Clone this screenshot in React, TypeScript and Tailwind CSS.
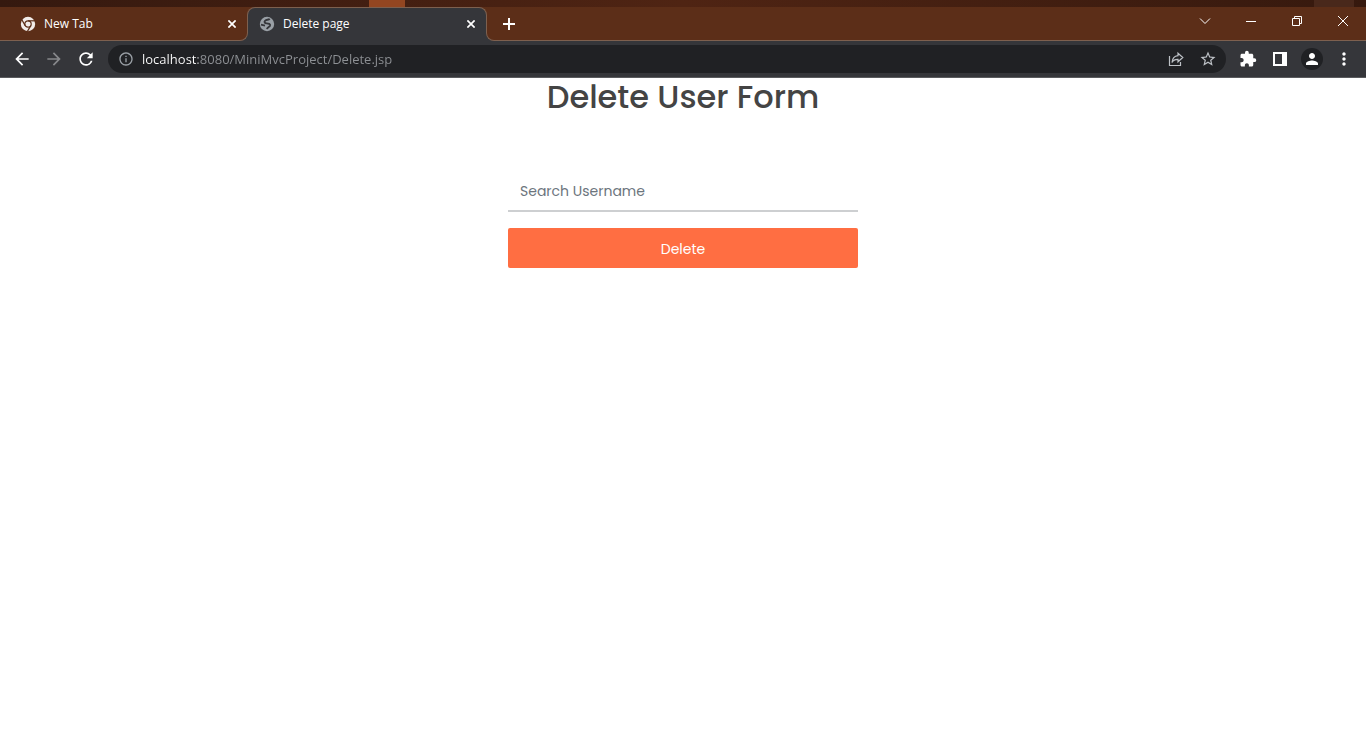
import React from "react";
import {
  MdArrowBack,
  MdArrowForward,
  MdExtension,
  MdInfoOutline,
  MdMoreVert,
  MdPerson,
  MdRefresh,
  MdStarBorder,
} from "react-icons/md";

const iconButton = "flex h-7 w-8 shrink-0 items-center justify-center";

function ChromeGlyph() {
  return (
    <svg className="size-4 shrink-0" viewBox="0 0 16 16" fill="none" aria-hidden="true">
      <circle cx="8" cy="8" r="7.2" fill="#f1ece9" />
      <g stroke="#5c2e18" strokeWidth="1.2">
        <circle cx="8" cy="8" r="3.2" />
        <path d="M8 4.8h7" />
        <path d="M8 4.8h7" transform="rotate(120 8 8)" />
        <path d="M8 4.8h7" transform="rotate(240 8 8)" />
      </g>
    </svg>
  );
}

function GlobeGlyph() {
  return (
    <svg className="size-4 shrink-0" viewBox="0 0 16 16" fill="none" aria-hidden="true">
      <circle cx="8" cy="8" r="7.2" fill="#9aa0a6" />
      <path
        d="M10.6 2.6C10 4.2 7.6 3.4 6.2 4.6 4.8 6 5.8 7.4 7.6 7.4 9.6 7.4 11.6 7.8 11 9.6 10.4 11.2 8.4 10.8 8 13.2"
        stroke="#35363a"
        strokeWidth="1.9"
      />
      <path d="M2 8.6 6 9.6" stroke="#35363a" strokeWidth="1.6" />
    </svg>
  );
}

function CloseGlyph() {
  return (
    <svg className="size-2" viewBox="0 0 8 8" fill="none" stroke="currentColor" strokeWidth="1.7" aria-hidden="true">
      <path d="M0.4 0.4 7.6 7.6M7.6 0.4 0.4 7.6" />
    </svg>
  );
}

function Tab({ title, icon, active }: { title: string; icon: React.ReactNode; active?: boolean }) {
  return (
    <div
      className={
        active
          ? "relative flex w-60 items-center rounded-t-lg border-x border-t border-[#7d604f] bg-[#35363a] pr-2.5 pb-px pl-[11px]"
          : "flex w-[247px] items-center border-b border-[#7d604f] pr-2.5 pl-5"
      }
    >
      {active && (
        <>
          <span className="absolute bottom-0 -left-2 size-2 bg-[#35363a]">
            <span className="block size-full rounded-br-lg border-r border-b border-[#7d604f] bg-[#5c2e18]" />
          </span>
          <span className="absolute -right-2 bottom-0 size-2 bg-[#35363a]">
            <span className="block size-full rounded-bl-lg border-b border-l border-[#7d604f] bg-[#5c2e18]" />
          </span>
        </>
      )}
      <button type="button" className="flex min-w-0 flex-1 items-center gap-2 text-left text-[12px] text-white">
        {icon}
        <span className="truncate">{title}</span>
      </button>
      <button type="button" aria-label={`Close ${title}`} className="p-px text-white">
        <CloseGlyph />
      </button>
    </div>
  );
}

function WindowButton({ label, children }: { label: string; children: React.ReactNode }) {
  return (
    <button type="button" aria-label={label} className="flex h-7 w-[46px] items-center justify-center text-white">
      <svg className="size-3" viewBox="0 0 12 12" fill="none" stroke="currentColor" strokeWidth="1" aria-hidden="true">
        {children}
      </svg>
    </button>
  );
}

export default function App() {
  return (
    <div className="min-h-screen bg-white font-['Open_Sans','Noto_Sans',sans-serif]">
      <header>
        <div className="flex h-[7px] bg-linear-to-r from-[#35190f] via-[#4f2413] to-[#36190e]">
          <div className="ml-[369px] w-9 bg-[#934621]" />
          <div className="mr-3 ml-auto w-10 bg-[#49281b]" />
        </div>
        <div className="flex h-[34px] bg-[#5c2e18]">
          <Tab title="New Tab" icon={<ChromeGlyph />} />
          <Tab title="Delete page" active icon={<GlobeGlyph />} />
          <div className="flex flex-1 border-b border-[#7d604f]">
            <button type="button" aria-label="New tab" className="ml-2 flex w-7 items-center justify-center text-white">
              <svg className="size-3" viewBox="0 0 12 12" stroke="currentColor" strokeWidth="2" aria-hidden="true">
                <path d="M6 0v12M0 6h12" />
              </svg>
            </button>
            <div className="ml-auto flex">
              <WindowButton label="Search tabs">
                <path d="M1 3.5 6 8.5 11 3.5" />
              </WindowButton>
              <WindowButton label="Minimize">
                <path d="M1 6.5h10" />
              </WindowButton>
              <WindowButton label="Restore">
                <path d="M1.5 3.5h7v7h-7zM3.5 3.5v-2h7v7h-2" />
              </WindowButton>
              <WindowButton label="Close">
                <path d="M1 1 11 11M11 1 1 11" />
              </WindowButton>
            </div>
          </div>
        </div>
        <div className="flex h-[37px] items-center border-b border-[#5a5b5e] bg-[#35363a] px-1.5 text-white">
          <button type="button" aria-label="Back" className={iconButton}>
            <MdArrowBack className="size-5" />
          </button>
          <button type="button" aria-label="Forward" className={`${iconButton} text-[#87888b]`}>
            <MdArrowForward className="size-5" />
          </button>
          <button type="button" aria-label="Reload" className={iconButton}>
            <MdRefresh className="size-5" />
          </button>
          <div className="mx-1.5 flex h-7 min-w-0 flex-1 items-center rounded-full bg-[#202124] pr-0.5 pl-2.5 text-[#bdc1c6]">
            <MdInfoOutline className="mr-2 size-4 shrink-0 text-[#9aa0a6]" />
            <input
              type="text"
              aria-label="Address"
              defaultValue="localhost:8080/MiniMvcProject/Delete.jsp"
              className="h-7 min-w-0 flex-1 bg-[linear-gradient(90deg,#ffffff_56px,#8e9195_56px)] bg-clip-text text-[13px] text-transparent outline-none"
            />
            <button type="button" aria-label="Share" className={iconButton}>
              <svg className="size-4" viewBox="0 0 16 16" fill="none" stroke="currentColor" strokeWidth="1.2" aria-hidden="true">
                <path d="M1.5 5v9.5h11V11" />
                <path d="M10 2.2 14.8 6.5 10 10.8V8.4C7 8.3 5.2 9.2 4 11.5 4.3 7.6 6.5 5 10 4.6Z" />
              </svg>
            </button>
            <button type="button" aria-label="Bookmark" className={iconButton}>
              <MdStarBorder className="size-[18px]" />
            </button>
          </div>
          <button type="button" aria-label="Extensions" className={iconButton}>
            <MdExtension className="size-[18px]" />
          </button>
          <button type="button" aria-label="Side panel" className={iconButton}>
            <svg className="size-3.5" viewBox="0 0 14 14" aria-hidden="true">
              <path fill="currentColor" fillRule="evenodd" d="M0 0h14v14H0zM2 2v10h7V2z" />
            </svg>
          </button>
          <button type="button" aria-label="Profile" className={iconButton}>
            <span className="flex size-[22px] items-center justify-center rounded-full bg-[#202124]">
              <MdPerson className="size-[18px]" />
            </span>
          </button>
          <button type="button" aria-label="Menu" className={iconButton}>
            <MdMoreVert className="size-5" />
          </button>
        </div>
      </header>
      <main className="flex flex-col items-center font-['Poppins','Inter',sans-serif]">
        <h1 className="text-[32px] leading-[38px] font-medium text-[#444444]">Delete User Form</h1>
        <form className="mt-14 flex w-full max-w-[350px] flex-col gap-4" onSubmit={(e) => e.preventDefault()}>
          <input
            type="text"
            aria-label="Search Username"
            placeholder="Search Username"
            className="h-10 border-b-2 border-[#cdcfd1] px-3 text-[14px] text-[#444444] outline-none placeholder:text-[#6c757d]"
          />
          <button type="submit" className="h-10 rounded-xs bg-[#ff6e42] pt-0.5 text-[14px] text-white">
            Delete
          </button>
        </form>
      </main>
    </div>
  );
}
